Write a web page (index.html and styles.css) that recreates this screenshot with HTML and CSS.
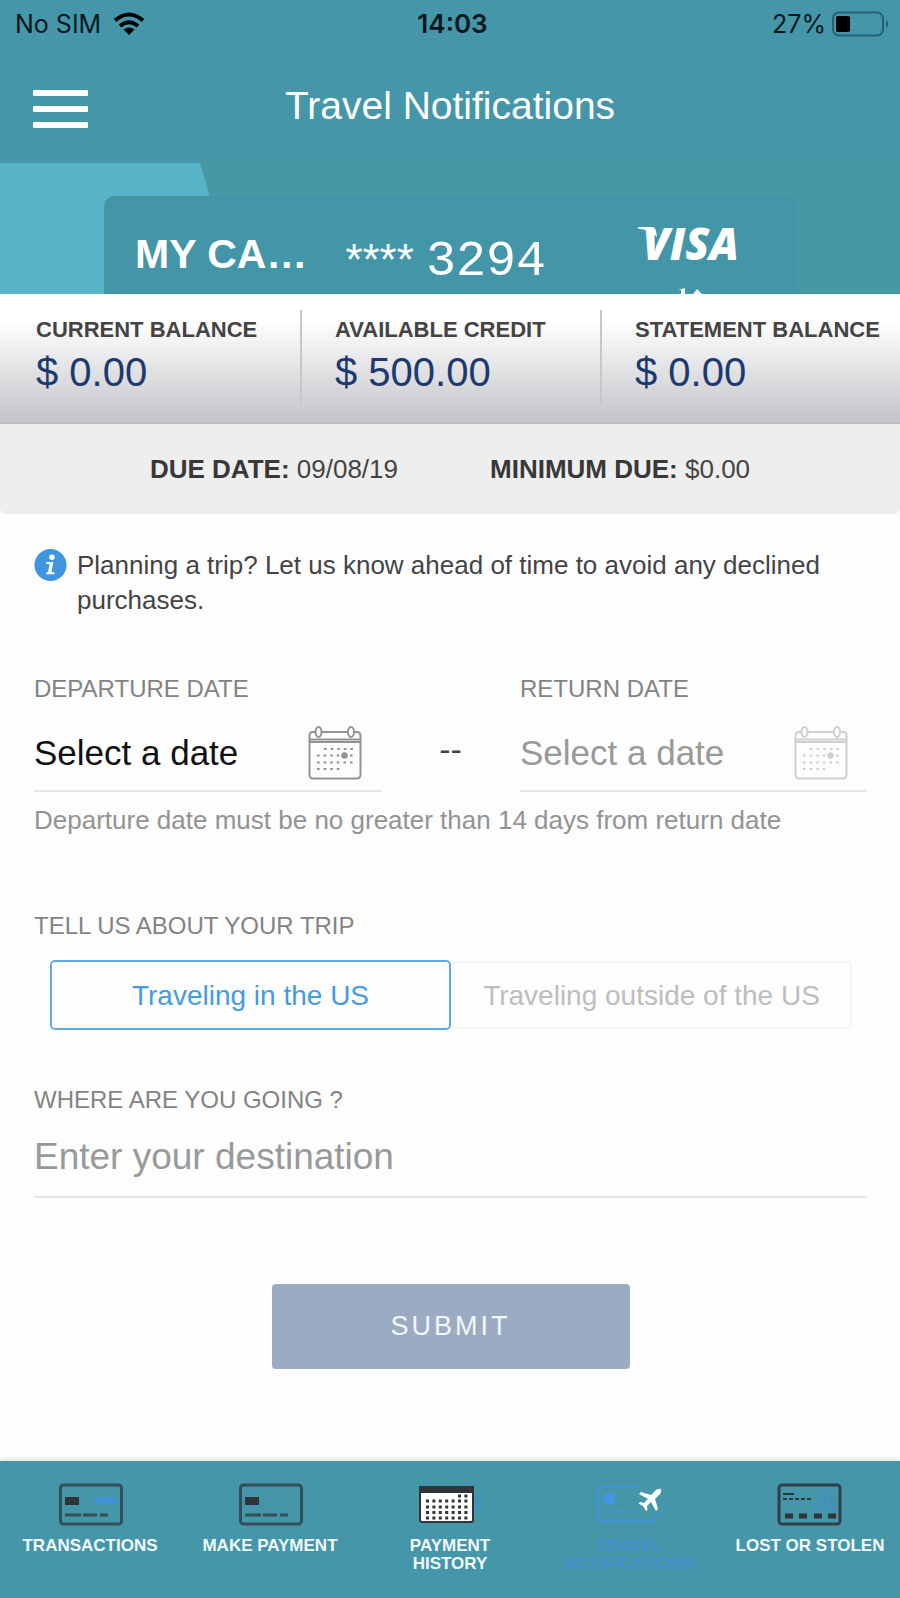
FILE: index.html
```html
<!DOCTYPE html>
<html lang="en">
<head>
<meta charset="utf-8">
<meta name="viewport" content="width=device-width, initial-scale=1">
<title>Travel Notifications</title>
<link rel="stylesheet" href="styles.css">
</head>
<body>
<div class="app">
  <header class="header">
    <div class="status">
      <span class="status-side">No SIM
        <svg width="32" height="24" viewBox="0 0 32 24" aria-hidden="true"><g fill="none" stroke="#000" stroke-width="4"><path d="M2 8.500Q16-3.500 30 8.500"/><path d="M7 14Q16 6.500 25 14"/></g><path d="M16 23l-5.500-5.500q5.500-4 11 0z"/></svg>
      </span>
      <span class="status-time">14:03</span>
      <span class="status-side status-end">27%
        <svg width="58" height="26" viewBox="0 0 58 26" aria-hidden="true"><rect x="1" y="1.500" width="50" height="23" rx="6" fill="none" stroke="#2a6370" stroke-width="2"/><rect x="4" y="5" width="14" height="16" rx="2"/><path d="M54 9q5 4 0 8z" fill="#2a6370"/></svg>
      </span>
    </div>
    <div class="titlebar">
      <button class="menu" type="button" aria-label="Menu"><span></span><span></span><span></span></button>
      <h1>Travel Notifications</h1>
    </div>
  </header>

  <section class="card-zone" aria-label="Card">
    <div class="card">
      <strong class="card-name">MY CA…</strong>
      <span class="card-stars">****</span>
      <span class="card-digits">3294</span>
      <div class="brand">
        <span class="visa"><svg class="visa-flick" width="20" height="10" viewBox="0 0 20 10" aria-hidden="true"><path d="M0 0H14Q17 0 18 4L19 10Q12 3 0 1.500z" fill="#fff"/></svg>VISA</span>
        <svg class="brand-sub" width="30" height="6" viewBox="0 0 30 6" aria-hidden="true"><path d="M2 2L9 0V6H5V2zM17 6L21 1l5 5z" fill="#e8f5fa"/></svg>
      </div>
    </div>
  </section>

  <section class="balances">
    <div class="balance"><h2>CURRENT BALANCE</h2><p>$ 0.00</p></div>
    <div class="balance"><h2>AVAILABLE CREDIT</h2><p>$ 500.00</p></div>
    <div class="balance"><h2>STATEMENT BALANCE</h2><p>$ 0.00</p></div>
  </section>

  <section class="due">
    <span><b>DUE DATE:</b> 09/08/19</span>
    <span><b>MINIMUM DUE:</b> $0.00</span>
  </section>

  <svg class="defs" aria-hidden="true">
    <symbol id="calendar" viewBox="0 0 54 54">
      <g fill="none" stroke="currentColor" stroke-width="2">
        <path d="M7 6H5Q1.500 6 1.500 10V48Q1.500 52.500 5 52.500H49Q52.500 52.500 52.500 48V10Q52.500 6 49 6H47M14 6H39M2 13.500H52M2 16H52"/>
        <ellipse cx="10.500" cy="6" rx="3" ry="5"/><ellipse cx="43" cy="6" rx="3" ry="5"/>
      </g>
      <g fill="none" stroke="currentColor" stroke-width="2" stroke-dasharray="2.600 4"><path d="M16 23H46M9 29.500H46M9 36.500H46M9 43H33"/></g>
      <circle cx="36.500" cy="29.500" r="3.200" fill="currentColor"/>
    </symbol>
  </svg>

  <form class="form" onsubmit="return false">
    <p class="info">
      <svg width="33" height="34" viewBox="0 0 34 34" aria-hidden="true"><circle cx="17" cy="17" r="16.500" fill="#3d96df"/><circle cx="18.500" cy="9" r="2.800" fill="#fff"/><path d="M12.500 14h7.500l-2 10.500h3v2h-8.500v-2h2l1.500-8.500h-3.500z" fill="#fff"/></svg>
      <span>Planning a trip? Let us know ahead of time to avoid any declined purchases.</span>
    </p>

    <div class="dates">
      <div class="field">
        <label for="depart">DEPARTURE DATE</label>
        <div class="date-row"><input class="date-input dark" id="depart" type="text" placeholder="Select a date"><svg class="cal" aria-hidden="true"><use href="#calendar"/></svg></div>
      </div>
      <span class="dash">--</span>
      <div class="field">
        <label for="return">RETURN DATE</label>
        <div class="date-row"><input class="date-input" id="return" type="text" placeholder="Select a date" disabled><svg class="cal faint" aria-hidden="true"><use href="#calendar"/></svg></div>
      </div>
    </div>
    <p class="hint">Departure date must be no greater than 14 days from return date</p>

    <fieldset class="trip">
      <legend>TELL US ABOUT YOUR TRIP</legend>
      <div class="segments">
        <label class="segment"><input type="radio" name="trip" checked><span>Traveling in the US</span></label>
        <label class="segment"><input type="radio" name="trip"><span>Traveling outside of the US</span></label>
      </div>
    </fieldset>

    <div class="where">
      <label for="dest">WHERE ARE YOU GOING ?</label>
      <input class="dest" id="dest" type="text" placeholder="Enter your destination">
    </div>

    <button class="submit" type="submit">SUBMIT</button>
  </form>

  <nav class="tabs">
    <a class="tab" href="#">
      <svg width="66" height="44" viewBox="0 0 66 44" aria-hidden="true"><rect x="3.500" y="2" width="61" height="39" rx="3" fill="none" stroke="#344f59" stroke-width="3"/><rect x="8" y="14" width="14" height="8" fill="#303438"/><rect x="38" y="14" width="22" height="7" fill="#4491d8"/><path d="M8 32h16M26 32h14M43 32h8" stroke="#344f59" stroke-width="3"/></svg>
      TRANSACTIONS</a>
    <a class="tab" href="#">
      <svg width="66" height="44" viewBox="0 0 66 44" aria-hidden="true"><rect x="3.500" y="2" width="61" height="39" rx="3" fill="none" stroke="#344f59" stroke-width="3"/><rect x="8" y="14" width="14" height="8" fill="#303438"/><path d="M8 32h16M26 32h14M43 32h8" stroke="#344f59" stroke-width="3"/></svg>
      MAKE PAYMENT</a>
    <a class="tab" href="#">
      <svg width="66" height="44" viewBox="0 0 66 44" aria-hidden="true"><path d="M63 13q-7-4-7 1t4 3q5 3 1 7t-7 0" fill="none" stroke="#3f8fce" stroke-width="3"/><rect x="3" y="4" width="53" height="35" rx="2" fill="#fff" stroke="#303438" stroke-width="2"/><path d="M2 3h55v7H2z" fill="#303438"/><path d="M41 13h12M9 18h44M9 24h44M9 29.500h44M9 35h44" stroke="#303438" stroke-width="3" stroke-dasharray="3 3.400"/></svg>
      PAYMENT<br>HISTORY</a>
    <a class="tab active" href="#" aria-current="page">
      <svg width="66" height="44" viewBox="0 0 66 44" aria-hidden="true"><path d="M43 4H4Q1.500 4 1.500 6V36Q1.500 38 4 38H57L60 30" fill="none" stroke="#4494d8" stroke-width="2.500"/><rect x="7" y="10" width="11" height="11" rx="2" fill="#4494e4"/><path d="M7 28h9M19 28h7M29 28h3M35 28h3" stroke="#4494d8" stroke-width="2.500"/><path d="M64 6Q60 5 57 9L54 12L44 9L42 11L51 16L47 20L43 19L41.500 20.500L46 23L49 28L50.500 27L50 23L54 19L59 28L61 26L58 16L61 13Q65 10 64 6z" fill="#fff"/></svg>
      TRAVEL<br>NOTIFICATIONS</a>
    <a class="tab" href="#">
      <svg width="66" height="44" viewBox="0 0 66 44" aria-hidden="true"><rect x="2" y="2" width="61" height="39" rx="3" fill="none" stroke="#303f48" stroke-width="3"/><path d="M6 11h11" stroke="#303438" stroke-width="2"/><path d="M6 16h28" stroke="#303438" stroke-width="2" stroke-dasharray="4 2"/><path d="M48 6L59 26H37zM48 13v7M48 22v2" fill="none" stroke="#3f8fc4" stroke-width="2"/><path d="M8 33h8M22 33h8M37 33h8M51 33h8" stroke="#303438" stroke-width="5"/></svg>
      LOST OR STOLEN</a>
  </nav>
</div>
</body>
</html>
```

FILE: styles.css
```css
* { box-sizing: border-box; }

body {
  margin: 0;
  background: #fdfdfe;
  color: #444;
  font-family: "Liberation Sans", Arial, sans-serif;
}

h1, h2, p, fieldset { margin: 0; padding: 0; border: 0; font-weight: 400; }

input, button { font-family: inherit; }

.app { min-height: 100vh; display: flex; flex-direction: column; }

.defs { display: none; }

/* Header */
.header { background: #4496a8; color: #fff; }

.status {
  display: grid;
  grid-template-columns: 1fr auto 1fr;
  align-items: center;
  height: 48px;
  padding: 0 10px 0 15px;
  color: #04161c;
  font: 25px/32px Inter, sans-serif;
}

.status-side { display: flex; align-items: center; gap: 12px; }
.status-end { justify-content: flex-end; gap: 6px; }
.status-time { font-weight: 600; font-size: 26px; }

.titlebar {
  display: grid;
  grid-template-columns: 55px 1fr 55px;
  align-items: center;
  height: 115px;
  padding: 0 33px;
}

.menu {
  display: grid;
  gap: 10px;
  padding: 6px 0 0;
  border: 0;
  background: none;
}
.menu span { height: 6px; background: #fff; border-radius: 1px; }

.titlebar h1 { font-size: 39px; line-height: 48px; text-align: center; }

/* Card strip */
.card-zone {
  display: flex;
  height: 131px;
  padding: 33px 104px 0;
  overflow: hidden;
  background: linear-gradient(74deg, #57b3c8 228px, #4698a5 229px);
}

.card {
  flex: 1;
  display: flex;
  align-items: flex-start;
  padding: 30px 57px 0 31px;
  border-radius: 10px 10px 0 0;
  background: #4296a8;
  color: #fff;
}

.card-name { font-size: 41px; line-height: 56px; }
.card-stars { margin-left: 38px; font-size: 44px; line-height: 68px; }
.card-digits { margin: 8px auto 0 12px; font: 50px/56px "Liberation Mono", monospace; }

.brand { display: flex; flex-direction: column; align-items: center; }
.visa { position: relative; font: italic 800 44px/34px "Open Sans", sans-serif; }
.visa-flick { position: absolute; left: -4px; top: 1px; }
.brand-sub { margin-top: 28px; }

/* Balances */
.balances {
  display: grid;
  grid-template-columns: repeat(3, 1fr);
  padding: 16px 0 17px;
  background: linear-gradient(#fff 20%, #c3c4c8);
  border-bottom: 1px solid #b9bbc0;
}

.balance { height: 96px; padding-left: 36px; white-space: nowrap; }
.balance + .balance { padding-left: 33px; border-left: 2px solid #c6c7ca; }
.balance h2 { font-size: 22px; line-height: 40px; font-weight: 700; }
.balance p { font-size: 40px; line-height: 44px; color: #1c3a70; }

.due {
  display: flex;
  justify-content: center;
  gap: 92px;
  padding: 29px 0;
  border-radius: 0 0 6px 6px;
  background: #eee;
  font-size: 26px;
  line-height: 32px;
}
.due b { color: #383838; }

/* Form */
.form { display: flex; flex-direction: column; padding: 34px 33px 80px 34px; }

.info { display: flex; gap: 10px; font-size: 26px; line-height: 35px; }
.info svg { flex: none; }

.dates { display: flex; margin-top: 57px; }
.field { flex: 1; min-width: 0; }
.dash { width: 139px; padding-top: 57px; font-size: 34px; line-height: 34px; text-align: center; }

.field label, .trip legend, .where label {
  display: block;
  padding: 0;
  font-size: 24px;
  line-height: 28px;
  color: #838383;
}

.date-row {
  display: flex;
  align-items: center;
  justify-content: space-between;
  height: 89px;
  padding: 12px 19px 0 0;
  border-bottom: 2px solid #e6e6e6;
}

.date-input {
  width: 100%;
  min-width: 0;
  padding: 0;
  border: 0;
  background: none;
  font-size: 35px;
}

.date-input::placeholder, .dest::placeholder { color: #999; opacity: 1; }
.date-input.dark::placeholder { color: #111; }

.cal { flex: none; width: 54px; height: 54px; color: #939393; }
.cal.faint { color: #d0d0d0; }

.hint { margin-top: 12px; font-size: 26px; line-height: 32px; color: #939393; }

.trip { margin-top: 76px; }
.segments { display: flex; align-items: center; margin: 20px 15px 0 16px; }
.segment { flex: 1; display: flex; }
.segment input { position: absolute; opacity: 0; }
.segment span {
  flex: 1;
  padding: 16px 0 14px;
  border: 2px solid #f4f4f4;
  border-left-color: transparent;
  border-radius: 5px;
  font-size: 28px;
  line-height: 34px;
  text-align: center;
  color: #bdbdbd;
}
.segment input:checked + span {
  padding: 17px 0 15px;
  border-color: #62aae4;
  color: #449be3;
}

.where { margin-top: 56px; }
.dest {
  display: block;
  width: 100%;
  height: 84px;
  padding: 4px 0 0;
  border: 0;
  border-bottom: 2px solid #e6e6e6;
  background: none;
  font-size: 37px;
}

.submit {
  align-self: center;
  width: 358px;
  height: 85px;
  margin-top: 86px;
  border: 0;
  border-radius: 4px;
  background: #9babc2;
  color: #f4f7fb;
  font-size: 27px;
  letter-spacing: 3px;
}

/* Bottom tabs */
.tabs {
  display: grid;
  grid-template-columns: repeat(5, 1fr);
  min-height: 137px;
  margin-top: auto;
  padding-top: 22px;
  background: #4496a8;
  box-shadow: 0 -1px 6px #d5dad5;
}

.tab {
  display: flow-root;
  color: #f2fbfd;
  font-size: 17px;
  font-weight: 700;
  line-height: 18px;
  text-align: center;
  text-decoration: none;
  white-space: nowrap;
}
.tab svg { display: block; margin: 0 auto 10px; }
.tab.active { color: #448fd0; }
```
